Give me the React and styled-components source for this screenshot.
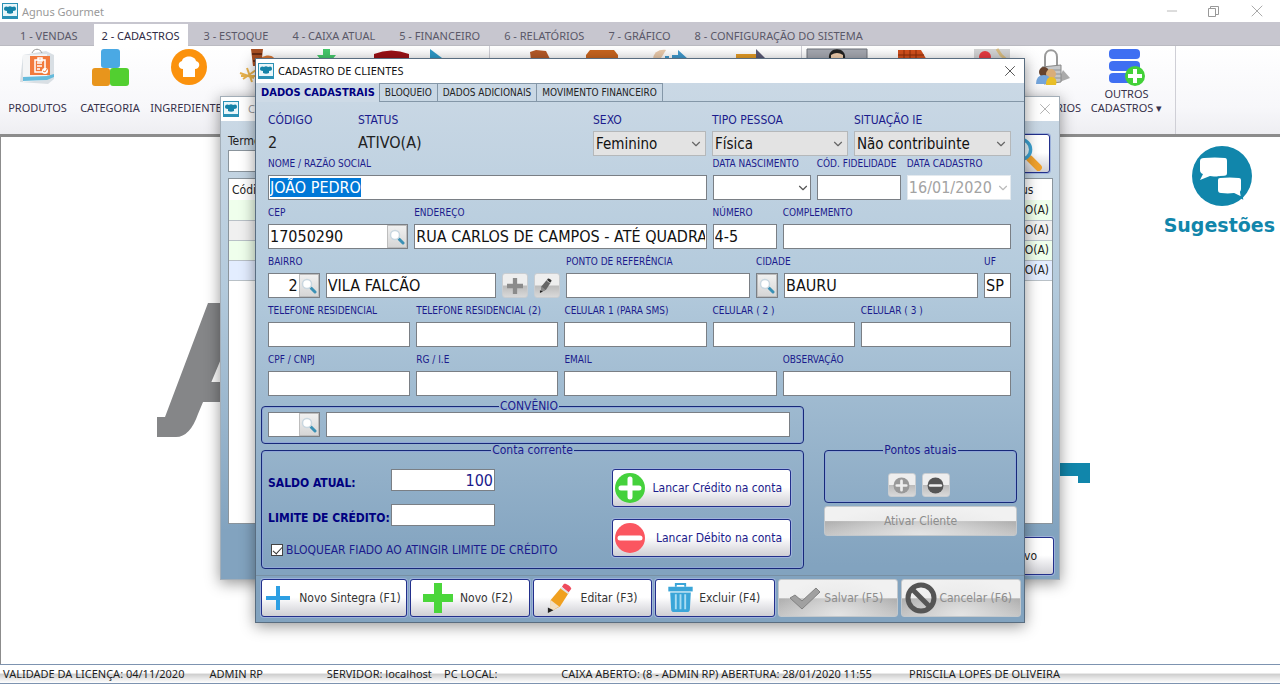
import React, { useEffect, useRef } from "react";
import styled, { createGlobalStyle, css } from "styled-components";
import { ChevronDown, Minus, X } from "lucide-react";

const GlobalStyle = createGlobalStyle`
    * {
        box-sizing: border-box;
    }

    body {
        margin: 0;
        background: #fff;
        color: #222;
        font-family: "Noto Sans", "Open Sans", sans-serif;
        font-size: 11px;
    }

    button, input, select {
        margin: 0;
        font-family: inherit;
        font-size: inherit;
        color: inherit;
    }
`;

const tahoma = `"DejaVu Sans Condensed", "DejaVu Sans", sans-serif`;

/* ---------- main window ---------- */

const AppWindow = styled.div`
    position: relative;
    display: flex;
    flex-direction: column;
    min-height: 100vh;
    overflow: hidden;
`;

const MainTitle = styled.header`
    display: flex;
    align-items: center;
    gap: 4px;
    height: 22px;
    padding: 0 13px 0 2px;
    color: #999;
`;

const WindowControls = styled.div`
    display: flex;
    align-items: center;
    gap: 28px;
    margin-left: auto;
`;

const IconButton = styled.button`
    display: flex;
    padding: 0;
    border: 0;
    background: none;
    color: ${(p) => p.$color || "#999"};
`;

const MenuBar = styled.nav`
    display: flex;
    gap: 8px;
    height: 24px;
    padding: 2px 12px 0 12px;
    background: #c7c6cf;
    border-bottom: 1px solid #bbbbc2;
`;

const MenuTab = styled.button`
    height: 22px;
    padding: 0 8px;
    border: 0;
    background: ${(p) => (p.$active ? "#fff" : "transparent")};
    color: ${(p) => (p.$active ? "#2f2b45" : "#5a5868")};
    white-space: nowrap;
`;

const Ribbon = styled.div`
    display: flex;
    height: 88px;
    background: linear-gradient(#fff, #f7f7fa 70%, #eeeef2);
`;

const RibbonGroup = styled.div`
    display: flex;
    padding-right: ${(p) => p.$end || 0}px;
    border-right: 1px solid #cfcfd6;
`;

const RibbonItem = styled.button`
    display: flex;
    flex-direction: column;
    align-items: center;
    justify-content: space-between;
    width: ${(p) => p.$width}px;
    height: 69px;
    padding: 3px 0 0;
    border: 0;
    background: none;
    color: #37324b;
    line-height: 14px;
    white-space: nowrap;

    svg {
        flex-shrink: 0;
    }
`;

const RibbonLabel = styled.span`
    display: flex;
    flex-direction: column;
    align-items: center;
`;

const Workspace = styled.main`
    display: flex;
    flex: 1;
    align-items: flex-start;
    justify-content: flex-end;
    border-top: 3px solid #8c8c8c;
    border-left: 1px solid #8c8c8c;
    background: #fff;
`;

const SuggestionLink = styled.a`
    display: flex;
    flex-direction: column;
    align-items: center;
    gap: 6px;
    padding: 9px 5px 0;
    color: #1186ab;
    font: bold 19px/26px "DejaVu Sans", sans-serif;
    text-decoration: none;

    svg {
        margin-left: 6px;
    }
`;

const Watermark = styled.svg`
    position: absolute;
    top: 303px;
    left: calc(50% - 484px);
`;

const StatusBar = styled.footer`
    display: grid;
    grid-template-columns: 206fr 117fr 117fr 117fr 347fr 373fr;
    height: 20px;
    border: solid #7d93b0;
    border-width: 1px 0;
    background: linear-gradient(#fff 45%, #cdcdcd 50%, #e8e8e8 75%, #fff);
    color: #1d1d1d;
    line-height: 17px;

    span {
        padding-left: 3px;
        white-space: nowrap;
    }
`;

/* ---------- windows ---------- */

const Window = styled.section`
    position: absolute;
    top: ${(p) => p.$top}px;
    left: calc(50% - ${(p) => p.$width / 2}px);
    width: ${(p) => p.$width}px;
    border: 1px solid ${(p) => (p.$active ? "#596d80" : "#a3aeb8")};
    background: linear-gradient(#cddae6, #b3cadc 40%, #82a3bf 90%);
    box-shadow: 0 3px 14px rgba(0, 0, 0, 0.42);
    font-family: ${tahoma};
`;

const WindowTitle = styled.header`
    display: flex;
    align-items: center;
    gap: ${(p) => (p.$active ? 4 : 9)}px;
    height: 24px;
    padding: 0 5px 0 2px;
    background: #fff;
    color: ${(p) => (p.$active ? "#111" : "#999")};
    font: 11px/20px "Noto Sans", sans-serif;

    button {
        margin-left: auto;
    }
`;

const glossy = css`
    border: 1px solid #23308c;
    border-radius: 3px;
    background: linear-gradient(#fff 48%, #f3f3f5 60%, #cfcfd4);
    box-shadow: 0 0 0 1px #9eb2da;

    &:disabled {
        border-color: #c3c8cc;
        background: radial-gradient(ellipse at 50% 100%, #e4e4e4, transparent 75%),
            linear-gradient(#f1f1f1 50%, #b0b0b0 52%, #c4c4c4);
        box-shadow: none;
        color: #8d8d8d;
    }
`;

const ListBody = styled.div`
    display: flex;
    flex-direction: column;
    padding: 13px 5px 4px 7px;
    font-size: 12px;
`;

const SearchRow = styled.div`
    display: flex;
    align-items: flex-start;
    justify-content: space-between;
    height: 44px;
    padding-right: 4px;

    label {
        display: block;
        height: 16px;
        color: #222;
        line-height: 14px;
    }

    input {
        width: 700px;
        height: 22px;
        border: 1px solid #8a949c;
    }
`;

const SearchButton = styled.button`
    ${glossy}
    display: flex;
    align-items: center;
    justify-content: flex-end;
    width: 52px;
    height: 39px;
    padding: 0 6px;
`;

const TableFrame = styled.div`
    height: 346px;
    margin-right: 1px;
    border: 1px solid #8a949c;
    background: #fff;
`;

const ClientTable = styled.table`
    width: 100%;
    border-collapse: collapse;
    font-size: 12px;

    th, td {
        height: 20px;
        padding: 0 3px;
        border-bottom: 1px solid #b9c1c7;
        font-weight: normal;
        text-align: left;
    }

    th {
        height: 21px;
        border: 0;
    }

    th:last-child {
        width: 56px;
    }

    td:last-child {
        text-align: right;
    }

    tr:nth-child(odd) td {
        background: #efffec;
    }

    tr:nth-child(even) td {
        background: #f0f0f0;
    }

    tr:last-child td {
        background: #e3edff;
    }
`;

const NewButton = styled.button`
    ${glossy}
    align-self: flex-end;
    width: 120px;
    height: 38px;
    margin-top: 13px;
    padding-right: 16px;
    text-align: right;
`;

/* ---------- client form ---------- */

const TabStrip = styled.div`
    display: flex;
    height: 19px;
    border-bottom: 1px solid #8497a8;
`;

const FormTab = styled.button`
    height: ${(p) => (p.$active ? 19 : 18)}px;
    padding: 0 ${(p) => (p.$active ? 4 : 5)}px 0 5px;
    border: solid #8497a8;
    border-width: ${(p) => (p.$active ? "0 1px 0 0" : "1px 1px 0 0")};
    background: ${(p) => (p.$active ? "#cddae6" : "transparent")};
    color: ${(p) => (p.$active ? "#000080" : "#222")};
    font-size: ${(p) => (p.$active ? 11 : 10)}px;
    font-weight: ${(p) => (p.$active ? "bold" : "normal")};
    line-height: 16px;
    white-space: nowrap;
`;

const Form = styled.form`
    padding: 10px 13px 0 12px;
`;

const FormRow = styled.div`
    display: grid;
    grid-template-columns: ${(p) => p.$cols};
    align-items: end;
    column-gap: 6px;
    margin-top: ${(p) => p.$gap ?? 5}px;
`;

const FieldBox = styled.div`
    min-width: 0;

    > label {
        display: block;
        height: 19px;
        color: #1b1b8c;
        font-size: ${(p) => (p.$large ? 12 : 10)}px;
        line-height: 16px;
        white-space: nowrap;
    }
`;

const StaticValue = styled.output`
    display: block;
    height: 25px;
    font-size: 16px;
    line-height: 24px;
`;

const InputFrame = styled.div`
    display: flex;
    align-items: center;
    height: 25px;
    border: 1px solid ${(p) => (p.$disabled ? "#e3e9ee" : "#7a7f85")};
    background: #fff;
    color: ${(p) => (p.$disabled ? "#a3a3a3" : "#111")};
`;

const TextInput = styled.input`
    flex: 1;
    min-width: 0;
    width: 100%;
    height: 22px;
    padding: 0 1px;
    border: 0;
    outline: 0;
    background: transparent;
    color: ${(p) => p.$color || "inherit"};
    font-size: 16px;
    text-align: ${(p) => p.$align || "left"};

    &::selection {
        background: #0078d7;
        color: #fff;
    }
`;

const SelectFrame = styled.div`
    display: grid;
    align-items: center;
    height: 25px;
    border: 1px solid #b5b8ba;
    background: #e3e3e3;

    > * {
        grid-area: 1 / 1;
    }

    svg {
        justify-self: end;
        margin-right: 2px;
        color: #666;
        pointer-events: none;
    }
`;

const Select = styled.select`
    width: 100%;
    height: 23px;
    padding: 0 2px;
    border: 0;
    appearance: none;
    background: transparent;
    font-size: 15px;
    color: #111;
`;

const LookupButton = styled.button`
    display: flex;
    flex-shrink: 0;
    align-items: center;
    justify-content: center;
    width: 20px;
    height: 23px;
    padding: 0;
    border: 1px solid #bdbdbd;
    background: linear-gradient(#f0f0f0, #d6d6d6);
`;

const SquareButton = styled.button`
    display: flex;
    align-items: center;
    justify-content: center;
    height: ${(p) => p.$height || 25}px;
    width: ${(p) => p.$width || 26}px;
    padding: 0;
    border: 1px solid #c9cdd1;
    border-radius: 3px;
    background: linear-gradient(#eee 48%, #bcbcbc 52%, #d9d9d9);
`;

const Lower = styled.div`
    display: grid;
    grid-template-columns: 543fr 193fr;
    column-gap: 20px;
    margin: 4px -6px 0 -7px;
`;

const Group = styled.fieldset`
    min-width: 0;
    margin: 0;
    padding: ${(p) => p.$pad || "0 6px"};
    border: 1px solid #17297a;
    border-radius: 4px;
    box-shadow: inset 0 0 0 1px #8fa6d6;

    legend {
        height: 12px;
        margin: 0 auto;
        padding: 0 1px;
        color: #1b1b8c;
        font-size: 12px;
        line-height: 12px;
    }
`;

const AccountBody = styled.div`
    display: flex;
    justify-content: space-between;
    height: 112px;
`;

const BalanceColumn = styled.div`
    display: flex;
    flex-direction: column;
    padding-top: 13px;
`;

const BalanceRow = styled.div`
    display: grid;
    grid-template-columns: 123px 104px;
    align-items: center;
    height: 35px;
    padding-bottom: 13px;

    label {
        padding-top: 6px;
        color: #000080;
        font-size: 12px;
        font-weight: bold;
        white-space: nowrap;
    }

    ${InputFrame} {
        height: 22px;
    }

    input {
        height: 20px;
    }
`;

const CheckLabel = styled.label`
    display: flex;
    align-items: center;
    gap: 3px;
    padding: 3px 0 0 3px;
    color: #1b1b8c;
    font-size: 12px;
    line-height: 16px;
    white-space: nowrap;

    input {
        display: grid;
        place-items: center;
        width: 12px;
        height: 12px;
        border: 1px solid #444;
        appearance: none;
        background: #fff;
    }

    input:checked::after {
        content: "";
        width: 4px;
        height: 8px;
        margin-bottom: 2px;
        border: solid #333;
        border-width: 0 1px 1px 0;
        transform: rotate(42deg);
    }
`;

const EntryButtons = styled.div`
    display: flex;
    flex-direction: column;
    gap: 12px;
    width: 179px;
    margin: 13px 6px 0 0;
`;

const EntryButton = styled.button`
    ${glossy}
    display: flex;
    align-items: center;
    justify-content: space-between;
    height: 38px;
    padding: 0 8px 0 1px;
    color: #1b1b8c;
    font-size: 12px;
    white-space: nowrap;
`;

const PointsColumn = styled.div`
    display: flex;
    flex-direction: column;
    gap: 3px;
`;

const PointsButtons = styled.div`
    display: flex;
    justify-content: center;
    gap: 6px;
    height: 46px;
    padding: 17px 4px 0 0;
`;

const ActivateButton = styled.button`
    ${glossy}
    height: 30px;
    font-size: 12px;
`;

const Actions = styled.footer`
    display: grid;
    grid-template-columns: 146fr repeat(5, 120fr);
    gap: 3px;
    margin-top: 6px;
    padding: 3px 3px 5px 5px;
    border-top: 1px solid #7890a4;
`;

const ActionButton = styled.button`
    ${glossy}
    display: flex;
    align-items: center;
    height: 38px;
    padding: 0 ${(p) => p.$right || 5}px 0 ${(p) => p.$left || 3}px;
    color: #333;
    font-size: 12px;
    white-space: nowrap;

    svg {
        flex-shrink: 0;
    }

    span {
        flex: 1;
        text-align: right;
    }
`;

/* ---------- drawings ---------- */

function AgnusIcon() {
    return (
        <svg width='16' height='16' viewBox='0 0 16 16' aria-hidden='true'>
            <rect x='.5' y='.5' width='15' height='15' fill='#e9f6fa' stroke='#2b91b5' />
            <path d='M2 6c0-3 3-3 4-2 1-1 3-1 4 0 2-1 4-1 4 2 0 1-1 2-3 2v2c-2 1-4 1-6 0V8C3 8 2 7 2 6z' fill='#1583a8' />
            <path d='M1 13h14v2H1z' fill='#2b91b5' />
        </svg>
    );
}

function RestoreIcon() {
    return (
        <svg width='11' height='11' viewBox='0 0 11 11' fill='none' stroke='#999' aria-hidden='true'>
            <path d='M.5 2.500h7v8h-7zM2.500 2.500v-2h8v8h-3' />
        </svg>
    );
}

function LensIcon({ size = 16, color = "#fff", ring = "#c9d7e0", handle = "#3a90b5" }) {
    return (
        <svg width={size} height={size} viewBox='0 0 16 16' fill='none' aria-hidden='true'>
            <path d='M10 10l4 4' stroke={handle} strokeWidth='3' strokeLinecap='round' />
            <circle cx='6' cy='6' r='4.500' fill={color} stroke={ring} strokeWidth='1.500' />
        </svg>
    );
}

function PlusIcon({ size = 30, color, weight = 8 }) {
    return (
        <svg width={size} height={size} viewBox='0 0 30 30' aria-hidden='true'>
            <path d='M15 0v30M0 15h30' stroke={color} strokeWidth={weight} />
        </svg>
    );
}

function RoundSign({ size = 32, color, minus, sign = "#fff" }) {
    return (
        <svg width={size} height={size} viewBox='0 0 32 32' aria-hidden='true'>
            <circle cx='16' cy='16' r='15' fill={color} />
            <path d={minus ? "M6 16h20" : "M16 7v18M7 16h18"} stroke={sign} strokeWidth='5' strokeLinecap='round' />
        </svg>
    );
}

function PencilIcon({ size = 30, gray }) {
    return (
        <svg width={size} height={size} viewBox='0 0 32 32' aria-hidden='true'>
            <path d='M5 18L16 5l8 6-9 14-10 5z' fill={gray ? "#666" : "#f0a020"} />
            <path d='M5 18l9 7-10 6z' fill={gray ? "#888" : "#f2dfc4"} />
            <path d='M2 26l6 3-6 3z' fill='#222' />
            <path d='M17 4l2-3c2-1 7 2 8 5l-3 4z' fill={gray ? "#333" : "#ef4b5c"} />
            <path d='M16 5l8 6' stroke={gray ? "#aaa" : "#dfe3e6"} strokeWidth='2' />
        </svg>
    );
}

function TrashIcon() {
    return (
        <svg width='27' height='30' viewBox='0 0 28 32' aria-hidden='true'>
            <path d='M9 4V1h10v3' fill='none' stroke='#3aa5d8' strokeWidth='2' />
            <path d='M1 4h26v5H1z' fill='#3aa5d8' />
            <path d='M3 10h22l-1 18q0 3-3 3H7q-3 0-3-3z' fill='#3aa5d8' />
            <path d='M9 12v16M14 12v16M19 12v16' stroke='#a9dcf2' strokeWidth='2' />
        </svg>
    );
}

function CheckIcon() {
    return (
        <svg width='32' height='30' viewBox='0 0 32 30' aria-hidden='true'>
            <path d='M1 15l5-3 7 6L27 5l4 4-18 17z' fill='#a0a0a0' stroke='#828282' strokeLinejoin='round' />
        </svg>
    );
}

function BlockedIcon() {
    return (
        <svg width='32' height='32' viewBox='0 0 32 32' fill='none' stroke='#555' strokeWidth='5' aria-hidden='true'>
            <circle cx='16' cy='16' r='13' />
            <path d='M7 7l18 18' />
        </svg>
    );
}

const ribbonArt = {
    products: (
        <>
            <path d='M4 6l23-4 8 4v24l-6 5-28-2z' fill='#d9dfe4' />
            <path d='M4 6l24-1v26L4 33z' fill='#f4f5f6' />
            <path d='M4 28l24-1 7-2v3l-7 3-24 1z' fill='#66bbdc' />
            <path d='M13 4c2-5 8-5 10 0' fill='none' stroke='#999' />
            <path d='M11 7h20v19H11z' fill='#f27a3c' />
            <path d='M16 11h10v12H16zM19 9h4v3h-4zM18 14h5M18 17h5M18 20h3' fill='none' stroke='#fff' strokeWidth='1.500' />
            <circle cx='26' cy='22' r='3' fill='#fff' />
            <path d='M24 22l2 1 2-3' fill='none' stroke='#f27a3c' />
        </>
    ),
    category: (
        <>
            <rect x='9' y='0' width='19' height='19' rx='3' fill='#4aa9e4' />
            <rect x='0' y='19' width='18' height='18' rx='3' fill='#e8951c' />
            <rect x='18' y='19' width='19' height='18' rx='3' fill='#52cf30' />
        </>
    ),
    ingredients: (
        <>
            <circle cx='18' cy='18' r='18' fill='#fb920d' />
            <path d='M12 28v-8c-5 0-6-7-1-8 1-6 13-6 14 0 5 1 4 8-1 8v8z' fill='#fff' />
        </>
    ),
    snack: (
        <>
            <path d='M11 0h12l-2 17h-8z' fill='#a84f22' />
            <path d='M12 5h10M13 12h8' stroke='#682c13' strokeWidth='2' />
            <path d='M0 24l14 5M3 30l13-9M7 19l5 14M1 27h16' stroke='#e7b14c' strokeWidth='2' />
            <path d='M22 8c8-4 14 0 14 6H22z' fill='#d97835' />
        </>
    ),
    download: <path d='M15 0h7v6h6L18 18 9 6h6z' fill='#45c96c' />,
    redBox: <path d='M1 5q17-7 35 0v15H1z' fill='#9c1116' />,
    blueArrow: <path d='M14 0l16 12-16 12z' fill='#2e99c8' />,
    person: <path d='M8 3l6-2 10 1 3 6 6 12H10z' fill='#b65a27' />,
    brownBox: <path d='M6 1h24l4 5v14H2V6z' fill='#c8651f' />,
    exchange: (
        <>
            <path d='M3 13C2 2 11 0 16 1L8 14z' fill='#e9c9aa' />
            <path d='M12 10h3v-3h4v3h3V6h6V1l10 9-8 8H12z' fill='#3f99cd' />
        </>
    ),
    goldArrow: (
        <>
            <path d='M4 5h22v12H4z' fill='#e39b26' />
            <path d='M24 0l9 9H24z' fill='#5a5a75' />
        </>
    ),
    clerk: (
        <>
            <path d='M-12 0h60v20h-60z' fill='#a5a8b0' stroke='#6e727a' />
            <path d='M10 10c-2-13 18-13 16 0z' fill='#222' />
            <path d='M12 6q6-4 12 0v12H12z' fill='#f2cfae' />
        </>
    ),
    cash: (
        <>
            <path d='M4 1h23l7 12H4z' fill='#d3501d' />
            <path d='M10 1v12M16 1v12M22 1v12M4 6h26' stroke='#8c2c0b' />
        </>
    ),
    markers: (
        <>
            <path d='M1 0h36v14H1z' fill='#d4d5d6' />
            <circle cx='12' cy='8' r='6' fill='#e93b42' />
            <path d='M24 0l4 6 9 8' stroke='#d9bd80' strokeWidth='3' fill='none' />
        </>
    ),
    users: (
        <>
            <path d='M9 18V8c0-9 12-9 12 0v10' fill='none' stroke='#999' strokeWidth='2' />
            <path d='M21 34l13-5-7-8z' fill='#aaa' />
            <path d='M6 18l19-2v17L8 35z' fill='#c5c7c9' stroke='#888' />
            <path d='M15 21h10M16 25h9M16 29h9' stroke='#8f9294' />
            <circle cx='8' cy='23' r='5' fill='#66432e' />
            <circle cx='15' cy='25' r='5' fill='#d9ad79' />
            <path d='M0 35q0-9 8-9t6 9z' fill='#74a5dc' />
            <path d='M10 36q0-8 5-8 7 0 5 8z' fill='#e9bf28' />
        </>
    ),
    database: (
        <>
            <rect x='1' y='0' width='31' height='10' rx='4' fill='#3f6ff2' />
            <rect x='1' y='12' width='31' height='10' rx='4' fill='#3f6ff2' />
            <rect x='1' y='24' width='31' height='10' rx='4' fill='#3f6ff2' />
            <circle cx='27' cy='27' r='10' fill='#42d138' />
            <path d='M27 20v14M20 27h14' stroke='#fff' strokeWidth='4' />
        </>
    ),
};

const ribbonGroups = [
    {
        end: 33,
        items: [
            { art: "products", label: ["PRODUTOS"], width: 75 },
            { art: "category", label: ["CATEGORIA"], width: 70 },
            { art: "ingredients", label: ["INGREDIENTES"], width: 88 },
            { art: "snack", width: 50 },
            { art: "download", width: 86 },
            { art: "redBox", width: 44 },
            { art: "blueArrow", width: 43 },
        ],
    },
    {
        end: 23,
        items: [
            { art: "person", width: 100 },
            { art: "brownBox", width: 24 },
            { art: "exchange", width: 108 },
            { art: "goldArrow", width: 56 },
        ],
    },
    {
        items: [
            { art: "clerk", width: 70 },
            { art: "cash", width: 80 },
            { art: "markers", width: 78 },
            { art: "users", label: ["USUÁRIOS"], width: 48 },
            { art: "database", label: ["OUTROS", "CADASTROS ▾"], width: 97 },
        ],
    },
];

const menus = [
    "1 - VENDAS",
    "2 - CADASTROS",
    "3 - ESTOQUE",
    "4 - CAIXA ATUAL",
    "5 - FINANCEIRO",
    "6 - RELATÓRIOS",
    "7 - GRÁFICO",
    "8 - CONFIGURAÇÃO DO SISTEMA",
];

const statusItems = [
    "VALIDADE DA LICENÇA: 04/11/2020",
    "ADMIN RP",
    "SERVIDOR: localhost",
    "PC LOCAL:",
    "CAIXA ABERTO: (8 - ADMIN RP) ABERTURA: 28/01/2020 11:55",
    "PRISCILA LOPES DE OLIVEIRA",
];

/* ---------- fields ---------- */

function Field({ id, label, value = "", lookup, date, disabled, align, inputRef }) {
    return (
        <FieldBox>
            {label && <label htmlFor={id}>{label}</label>}
            <InputFrame $disabled={disabled}>
                <TextInput
                    id={id}
                    ref={inputRef}
                    defaultValue={value}
                    disabled={disabled}
                    $align={align}
                    aria-label={label ? undefined : id}
                />
                {lookup && (
                    <LookupButton type='button' aria-label='Pesquisar'>
                        <LensIcon />
                    </LookupButton>
                )}
                {date && (
                    <IconButton type='button' disabled={disabled} $color={disabled ? "#bbb" : "#555"} aria-label='Calendário'>
                        <ChevronDown size={14} />
                    </IconButton>
                )}
            </InputFrame>
        </FieldBox>
    );
}

function SelectField({ id, label, value }) {
    return (
        <FieldBox $large>
            <label htmlFor={id}>{label}</label>
            <SelectFrame>
                <Select id={id} defaultValue={value}>
                    <option>{value}</option>
                </Select>
                <ChevronDown size={14} />
            </SelectFrame>
        </FieldBox>
    );
}

function ClientList() {
    return (
        <Window $top={96} $width={840}>
            <WindowTitle>
                <AgnusIcon />
                CLIENTES
                <IconButton aria-label='Fechar'>
                    <X size={18} strokeWidth={1} />
                </IconButton>
            </WindowTitle>
            <ListBody>
                <SearchRow>
                    <div>
                        <label htmlFor='termo'>Termo</label>
                        <input id='termo' />
                    </div>
                    <SearchButton aria-label='Pesquisar'>
                        <LensIcon size={36} color='#e9f7fc' ring='#3da4d4' handle='#f0a12c' />
                    </SearchButton>
                </SearchRow>
                <TableFrame>
                    <ClientTable>
                        <thead>
                            <tr>
                                <th>Código</th>
                                <th>Status</th>
                            </tr>
                        </thead>
                        <tbody>
                            {[0, 1, 2, 3].map((row) => (
                                <tr key={row}>
                                    <td />
                                    <td>ATIVO(A)</td>
                                </tr>
                            ))}
                        </tbody>
                    </ClientTable>
                </TableFrame>
                <NewButton>Novo</NewButton>
            </ListBody>
        </Window>
    );
}

function ClientForm() {
    const nameRef = useRef(null);

    useEffect(() => {
        nameRef.current.focus();
        nameRef.current.select();
    }, []);

    return (
        <Window $top={58} $width={770} $active>
            <WindowTitle $active>
                <AgnusIcon />
                CADASTRO DE CLIENTES
                <IconButton $color='#222' aria-label='Fechar'>
                    <X size={18} strokeWidth={1} />
                </IconButton>
            </WindowTitle>
            <TabStrip>
                <FormTab $active>DADOS CADASTRAIS</FormTab>
                <FormTab>BLOQUEIO</FormTab>
                <FormTab>DADOS ADICIONAIS</FormTab>
                <FormTab>MOVIMENTO FINANCEIRO</FormTab>
            </TabStrip>
            <Form id='cliente'>
                <FormRow $cols='84fr 229fr 113fr 136fr 157fr' $gap={0}>
                    <FieldBox $large>
                        <label htmlFor='codigo'>CÓDIGO</label>
                        <StaticValue id='codigo'>2</StaticValue>
                    </FieldBox>
                    <FieldBox $large>
                        <label htmlFor='status'>STATUS</label>
                        <StaticValue id='status'>ATIVO(A)</StaticValue>
                    </FieldBox>
                    <SelectField id='sexo' label='SEXO' value='Feminino' />
                    <SelectField id='tipo' label='TIPO PESSOA' value='Física' />
                    <SelectField id='situacao' label='SITUAÇÃO IE' value='Não contribuinte' />
                </FormRow>
                <FormRow $cols='438fr 98fr 84fr 104fr' $gap={0}>
                    <Field id='nome' label='NOME / RAZÃO SOCIAL' value='JOÃO PEDRO' inputRef={nameRef} />
                    <Field id='nascimento' label='DATA NASCIMENTO' date />
                    <Field id='fidelidade' label='CÓD. FIDELIDADE' />
                    <Field id='cadastro' label='DATA CADASTRO' value='16/01/2020' date disabled />
                </FormRow>
                <FormRow $cols='140fr 292fr 64fr 228fr'>
                    <Field id='cep' label='CEP' value='17050290' lookup />
                    <Field id='endereco' label='ENDEREÇO' value='RUA CARLOS DE CAMPOS - ATÉ QUADRA' />
                    <Field id='numero' label='NÚMERO' value='4-5' />
                    <Field id='complemento' label='COMPLEMENTO' />
                </FormRow>
                <FormRow $cols='52fr 171fr 25fr 25fr 185fr 22fr 195fr 27fr'>
                    <Field id='bairro' label='BAIRRO' value='2' align='right' lookup />
                    <Field id='bairro-nome' value='VILA FALCÃO' />
                    <SquareButton type='button' aria-label='Adicionar bairro'>
                        <PlusIcon size={16} color='#8b8b8b' />
                    </SquareButton>
                    <SquareButton type='button' aria-label='Editar bairro'>
                        <PencilIcon size={15} gray />
                    </SquareButton>
                    <Field id='referencia' label='PONTO DE REFERÊNCIA' />
                    <FieldBox>
                        <label htmlFor='cidade'>CIDADE</label>
                        <InputFrame>
                            <LookupButton type='button' aria-label='Pesquisar cidade'>
                                <LensIcon />
                            </LookupButton>
                        </InputFrame>
                    </FieldBox>
                    <Field id='cidade' value='BAURU' />
                    <Field id='uf' label='UF' value='SP' />
                </FormRow>
                <FormRow $cols='142fr 142fr 142fr 142fr 150fr'>
                    <Field id='telefone' label='TELEFONE RESIDENCIAL' />
                    <Field id='telefone2' label='TELEFONE RESIDENCIAL (2)' />
                    <Field id='celular' label='CELULAR 1 (PARA SMS)' />
                    <Field id='celular2' label='CELULAR ( 2 )' />
                    <Field id='celular3' label='CELULAR ( 3 )' />
                </FormRow>
                <FormRow $cols='142fr 142fr 212fr 228fr'>
                    <Field id='cpf' label='CPF / CNPJ' />
                    <Field id='rg' label='RG / I.E' />
                    <Field id='email' label='EMAIL' />
                    <Field id='observacao' label='OBSERVAÇÃO' />
                </FormRow>
                <Lower>
                    <Group $pad='0 13px 6px 6px'>
                        <legend>CONVÊNIO</legend>
                        <FormRow $cols='52fr 464fr' $gap={0}>
                            <Field id='convenio' lookup />
                            <Field id='convenio-nome' />
                        </FormRow>
                    </Group>
                    <span />
                    <Group>
                        <legend>Conta corrente</legend>
                        <AccountBody>
                            <BalanceColumn>
                                <BalanceRow>
                                    <label htmlFor='saldo'>SALDO ATUAL:</label>
                                    <InputFrame>
                                        <TextInput id='saldo' defaultValue='100' $align='right' $color='#1b1b8c' />
                                    </InputFrame>
                                </BalanceRow>
                                <BalanceRow>
                                    <label htmlFor='limite'>LIMITE DE CRÉDITO:</label>
                                    <InputFrame>
                                        <TextInput id='limite' />
                                    </InputFrame>
                                </BalanceRow>
                                <CheckLabel>
                                    <input type='checkbox' defaultChecked />
                                    BLOQUEAR FIADO AO ATINGIR LIMITE DE CRÉDITO
                                </CheckLabel>
                            </BalanceColumn>
                            <EntryButtons>
                                <EntryButton type='button'>
                                    <RoundSign color='#45d13c' />
                                    Lancar Crédito na conta
                                </EntryButton>
                                <EntryButton type='button'>
                                    <RoundSign color='#fb5660' minus />
                                    Lancar Débito na conta
                                </EntryButton>
                            </EntryButtons>
                        </AccountBody>
                    </Group>
                    <PointsColumn>
                        <Group>
                            <legend>Pontos atuais</legend>
                            <PointsButtons>
                                <SquareButton type='button' $width={28} $height={24} aria-label='Somar pontos'>
                                    <RoundSign size={17} color='#999' sign='#eee' />
                                </SquareButton>
                                <SquareButton type='button' $width={28} $height={24} aria-label='Subtrair pontos'>
                                    <RoundSign size={17} color='#555' sign='#eee' minus />
                                </SquareButton>
                            </PointsButtons>
                        </Group>
                        <ActivateButton type='button' disabled>
                            Ativar Cliente
                        </ActivateButton>
                    </PointsColumn>
                </Lower>
            </Form>
            <Actions>
                <ActionButton $left={4}>
                    <PlusIcon size={24} color='#2d9fe3' weight={5} />
                    <span>Novo Sintegra (F1)</span>
                </ActionButton>
                <ActionButton $left={12} $right={16}>
                    <PlusIcon color='#4bd63b' />
                    <span>Novo (F2)</span>
                </ActionButton>
                <ActionButton $left={12} $right={14}>
                    <PencilIcon />
                    <span>Editar (F3)</span>
                </ActionButton>
                <ActionButton $left={11} $right={14}>
                    <TrashIcon />
                    <span>Excluir (F4)</span>
                </ActionButton>
                <ActionButton $left={10} $right={14} disabled>
                    <CheckIcon />
                    <span>Salvar (F5)</span>
                </ActionButton>
                <ActionButton $right={8} disabled>
                    <BlockedIcon />
                    <span>Cancelar (F6)</span>
                </ActionButton>
            </Actions>
        </Window>
    );
}

function App() {
    return (
        <>
            <GlobalStyle />
            <AppWindow>
                <MainTitle>
                    <AgnusIcon />
                    Agnus Gourmet
                    <WindowControls>
                        <IconButton aria-label='Minimizar'>
                            <Minus size={16} strokeWidth={1} />
                        </IconButton>
                        <IconButton aria-label='Restaurar'>
                            <RestoreIcon />
                        </IconButton>
                        <IconButton aria-label='Fechar'>
                            <X size={20} strokeWidth={1} />
                        </IconButton>
                    </WindowControls>
                </MainTitle>
                <MenuBar>
                    {menus.map((menu, i) => (
                        <MenuTab key={menu} $active={i === 1}>
                            {menu}
                        </MenuTab>
                    ))}
                </MenuBar>
                <Ribbon>
                    {ribbonGroups.map((group, i) => (
                        <RibbonGroup key={i} $end={group.end}>
                            {group.items.map((item) => (
                                <RibbonItem key={item.art} $width={item.width} aria-label={item.label ? undefined : item.art}>
                                    <svg width='37' height='37' viewBox='0 0 37 37' overflow='visible' aria-hidden='true'>
                                        {ribbonArt[item.art]}
                                    </svg>
                                    {item.label && (
                                        <RibbonLabel>
                                            {item.label.map((line) => (
                                                <span key={line}>{line}</span>
                                            ))}
                                        </RibbonLabel>
                                    )}
                                </RibbonItem>
                            ))}
                        </RibbonGroup>
                    ))}
                </Ribbon>
                <Workspace>
                    <SuggestionLink href='#sugestoes'>
                        <svg width='60' height='60' viewBox='0 0 60 60' aria-hidden='true'>
                            <circle cx='30' cy='30' r='30' fill='#1186ab' />
                            <path d='M12 12q11-1 21 0 2 0 2 3v12q0 3-3 3-6 1-14 0l-10 4 3-6q-3-1-3-4V15q0-3 4-3z' fill='#fff' />
                            <path d='M28 31q10-1 19 0 3 0 3 3v9q0 2-1 3l1 6-8-4q-6 1-13 0-4 0-4-4V34q0-3 3-3z' fill='#fff' stroke='#1186ab' strokeWidth='2' />
                        </svg>
                        Sugestões
                    </SuggestionLink>
                </Workspace>
                <StatusBar>
                    {statusItems.map((item) => (
                        <span key={item}>{item}</span>
                    ))}
                </StatusBar>
                <Watermark width='936' height='242' viewBox='0 0 936 242' aria-hidden='true'>
                    <path d='M52 0h60v20H80L42 111q-8 23-22 23H1v-20h8z' fill='#858688' />
                    <path d='M40 79h60v20H40z' fill='#858688' />
                    <path d='M900 160h34v20h-12v-7h-18v67h-4z' fill='#1186ab' />
                </Watermark>
                <ClientList />
                <ClientForm />
            </AppWindow>
        </>
    );
}

export default App;
